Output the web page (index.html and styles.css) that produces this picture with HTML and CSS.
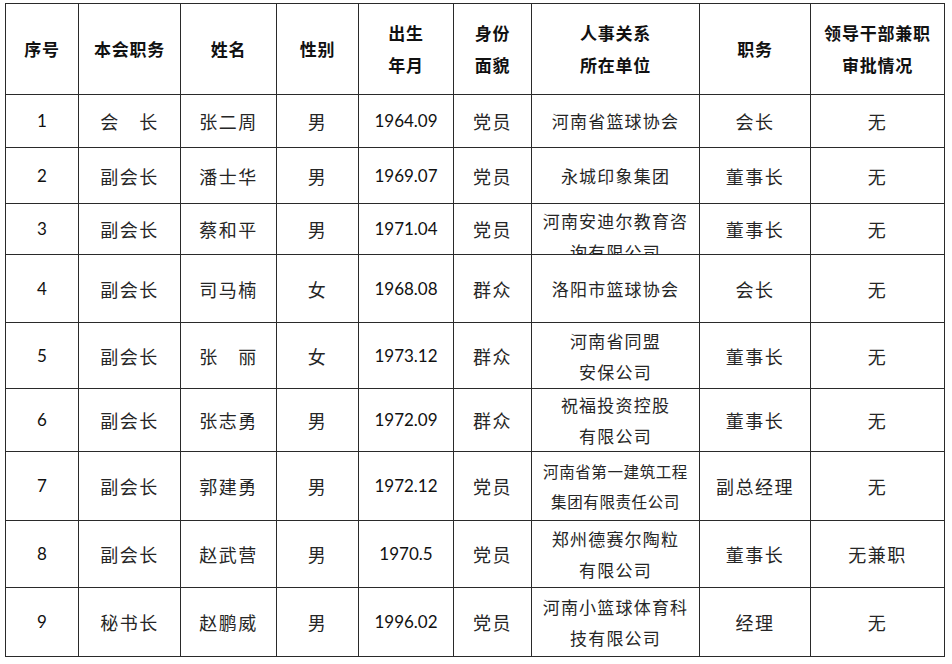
FILE: index.html
```html
<!DOCTYPE html>
<html lang="zh-CN">
<head>
<meta charset="utf-8">
<title>篮球协会领导班子名单</title>
<link rel="stylesheet" href="styles.css">
</head>
<body>
<table class="roster">
  <colgroup>
    <col class="c-no"><col class="c-post"><col class="c-name"><col class="c-sex"><col class="c-birth"><col class="c-party"><col class="c-unit"><col class="c-job"><col class="c-appr">
  </colgroup>
  <thead>
    <tr class="r-head">
      <th>序号</th><th>本会职务</th><th>姓名</th><th>性别</th><th>出生<br>年月</th><th>身份<br>面貌</th><th>人事关系<br>所在单位</th><th>职务</th><th>领导干部兼职<br>审批情况</th>
    </tr>
  </thead>
  <tbody>
    <tr class="r1">
      <td class="num">1</td><td>会　长</td><td>张二周</td><td>男</td><td class="num">1964.09</td><td>党员</td><td class="unit">河南省篮球协会</td><td>会长</td><td>无</td>
    </tr>
    <tr class="r2">
      <td class="num">2</td><td>副会长</td><td>潘士华</td><td>男</td><td class="num">1969.07</td><td>党员</td><td class="unit">永城印象集团</td><td>董事长</td><td>无</td>
    </tr>
    <tr class="r3">
      <td class="num">3</td><td>副会长</td><td>蔡和平</td><td>男</td><td class="num">1971.04</td><td>党员</td><td class="unit clipcell"><div class="clip">河南安迪尔教育咨<br>询有限公司</div></td><td>董事长</td><td>无</td>
    </tr>
    <tr class="r4">
      <td class="num">4</td><td>副会长</td><td>司马楠</td><td>女</td><td class="num">1968.08</td><td>群众</td><td class="unit">洛阳市篮球协会</td><td>会长</td><td>无</td>
    </tr>
    <tr class="r5">
      <td class="num">5</td><td>副会长</td><td>张　丽</td><td>女</td><td class="num">1973.12</td><td>群众</td><td class="unit two">河南省同盟<br>安保公司</td><td>董事长</td><td>无</td>
    </tr>
    <tr class="r6">
      <td class="num">6</td><td>副会长</td><td>张志勇</td><td>男</td><td class="num">1972.09</td><td>群众</td><td class="unit two">祝福投资控股<br>有限公司</td><td>董事长</td><td>无</td>
    </tr>
    <tr class="r7">
      <td class="num">7</td><td>副会长</td><td>郭建勇</td><td>男</td><td class="num">1972.12</td><td>党员</td><td class="unit two small">河南省第一建筑工程<br>集团有限责任公司</td><td>副总经理</td><td>无</td>
    </tr>
    <tr class="r8">
      <td class="num">8</td><td>副会长</td><td>赵武营</td><td>男</td><td class="num">1970.5</td><td>党员</td><td class="unit two">郑州德赛尔陶粒<br>有限公司</td><td>董事长</td><td>无兼职</td>
    </tr>
    <tr class="r9">
      <td class="num">9</td><td>秘书长</td><td>赵鹏威</td><td>男</td><td class="num">1996.02</td><td>党员</td><td class="unit two">河南小篮球体育科<br>技有限公司</td><td>经理</td><td>无</td>
    </tr>
  </tbody>
</table>
</body>
</html>
```

FILE: styles.css
```css
html, body {
  margin: 0;
  padding: 0;
  background: #ffffff;
}

body {
  padding: 3px 0 0 5px;
  font-family: "Lato", "Noto Sans CJK SC", sans-serif;
  color: #222222;
}

.roster {
  border-collapse: collapse;
  table-layout: fixed;
  width: 939px;
}

.c-no { width: 73px; }
.c-post { width: 102px; }
.c-name { width: 96px; }
.c-sex { width: 82px; }
.c-birth { width: 95px; }
.c-party { width: 78px; }
.c-unit { width: 168px; }
.c-job { width: 111px; }
.c-appr { width: 134px; }

.roster th,
.roster td {
  border: 1px solid #2a2a2a;
  padding: 0;
  text-align: center;
  vertical-align: middle;
  overflow: hidden;
}

.roster th {
  font-family: "Noto Sans CJK SC", sans-serif;
  font-weight: 700;
  font-size: 17px;
  letter-spacing: 0.8px;
  line-height: 32px;
  color: #111111;
}

.roster td {
  font-family: "Noto Sans CJK SC", sans-serif;
  font-weight: 400;
  font-size: 18px;
  letter-spacing: 1.5px;
  line-height: 24px;
  color: #262626;
}

.roster td.num {
  font-family: "Lato", sans-serif;
  font-size: 17px;
  letter-spacing: 0;
  color: #111111;
}

.roster td.unit {
  font-size: 17px;
  letter-spacing: 1.2px;
}

.roster td.two {
  line-height: 31px;
}

.roster td.small {
  font-size: 15.5px;
  letter-spacing: 0.6px;
  line-height: 30px;
}

.roster td.clipcell {
  vertical-align: top;
}

.clip {
  height: 50px;
  overflow: hidden;
  line-height: 31px;
  padding-top: 1px;
  box-sizing: border-box;
}

.r-head { height: 91px; }
.r1 { height: 53px; }
.r2 { height: 56px; }
.r3 { height: 51px; }
.r4 { height: 68px; }
.r5 { height: 66px; }
.r6 { height: 63px; }
.r7 { height: 69px; }
.r8 { height: 67px; }
.r9 { height: 69px; }
```
